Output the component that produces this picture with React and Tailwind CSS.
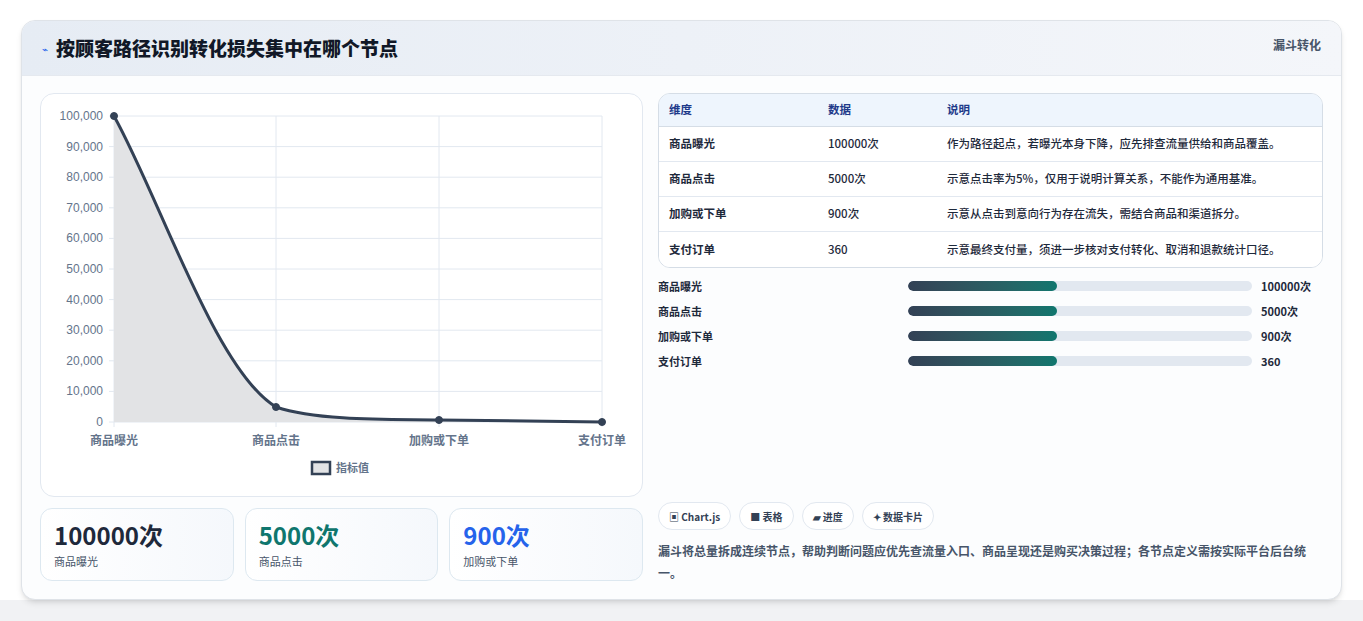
import React from "react";

const F = { fontFamily: '"Noto Sans CJK SC","Noto Sans",sans-serif' };
const rows = [
  ["商品曝光", "100000次", "作为路径起点，若曝光本身下降，应先排查流量供给和商品覆盖。"],
  ["商品点击", "5000次", "示意点击率为5%，仅用于说明计算关系，不能作为通用基准。"],
  ["加购或下单", "900次", "示意从点击到意向行为存在流失，需结合商品和渠道拆分。"],
  ["支付订单", "360", "示意最终支付量，须进一步核对支付转化、取消和退款统计口径。"],
];

function Chart() {
  const ys = [0, 10000, 20000, 30000, 40000, 50000, 60000, 70000, 80000, 90000, 100000];
  const y = (v) => 421 - (v / 100000) * 306;
  const xs = [113, 275, 438, 601];
  const labels = ["商品曝光", "商品点击", "加购或下单", "支付订单"];
  const curve = "M113,115 C160,200 215,370 275,406 C320,421 400,418 438,419 C500,420 560,421 601,421";
  return (
    <svg width="602" height="403" className="block">
      <g transform="translate(-40,-93)" fontFamily="Liberation Sans, sans-serif">
        {ys.map((v) => (
          <g key={v}>
            <line x1="108" x2="601" y1={y(v)} y2={y(v)} stroke="#e2e8f0" />
            <text x="102" y={y(v) + 4} textAnchor="end" fontSize="12" fill="#64748b">{v.toLocaleString("en-US")}</text>
          </g>
        ))}
        {xs.map((x) => (
          <line key={x} x1={x} x2={x} y1="115" y2="426" stroke="#e2e8f0" />
        ))}
        <path d={curve + " L601,421 L113,421 Z"} fill="#e2e3e5" />
        <path d={curve} fill="none" stroke="#334155" strokeWidth="3" />
        {[[113, 115], [275, 406], [438, 419], [601, 421]].map(([cx, cy]) => (
          <circle key={cx} cx={cx} cy={cy} r="3.5" fill="#334155" stroke="#334155" />
        ))}
        {xs.map((x, i) => (
          <text key={x} x={x} y="444" textAnchor="middle" fontSize="12" fontWeight="700" fill="#64748b" fontFamily='"Noto Sans CJK SC",sans-serif'>{labels[i]}</text>
        ))}
        <rect x="311" y="461" width="18" height="12" fill="#e2e3e5" stroke="#334155" strokeWidth="2.5" />
        <text x="335" y="471" fontSize="11" fontWeight="700" fill="#64748b" fontFamily='"Noto Sans CJK SC",sans-serif'>指标值</text>
      </g>
    </svg>
  );
}

export default function App() {
  return (
    <div className="min-h-[621px] bg-[#f1f2f4] pb-[22px]" style={F}>
      <div className="bg-white pt-[20px] px-[21px]">
      <div className="bg-[#fcfdfe] rounded-[14px] border border-[#dfe3e8] shadow-md overflow-hidden h-[580px]">
        <div className="h-[55px] bg-gradient-to-r from-[#e6ecf4] to-[#f4f6fa] flex items-center px-[20px] justify-between border-b border-[#e5e9ef]">
          <div className="flex items-center gap-[8px]">
            <span className="text-[#2563eb] text-[10px]">⌁</span>
            <span className="text-[19px] font-black text-[#111827]">按顾客路径识别转化损失集中在哪个节点</span>
          </div>
          <span className="text-[12px] font-bold text-[#475569] self-start mt-[15px]">漏斗转化</span>
        </div>
        <div className="flex gap-[15px] px-[18px] pt-[17px]">
          <div className="w-[603px] flex flex-col gap-[11px]">
            <div className="h-[404px] rounded-[14px] border border-[#e2e8f0] bg-white overflow-hidden"><Chart /></div>
            <div className="flex gap-[11px]">
              {[["100000次", "text-[#1e293b]", "商品曝光"], ["5000次", "text-[#0f766e]", "商品点击"], ["900次", "text-[#2563eb]", "加购或下单"]].map(([v, c, l]) => (
                <div key={l} className="flex-1 h-[73px] rounded-[12px] border border-[#dde8f0] bg-gradient-to-r from-white to-[#f5f8fc] px-[13px] pt-[8px]">
                  <div className={"text-[24px] font-bold leading-[36px] " + c}>{v}</div>
                  <div className="text-[11px] text-[#475569] leading-[16px]">{l}</div>
                </div>
              ))}
            </div>
          </div>
          <div className="flex-1 flex flex-col">
            <div className="rounded-[12px] border border-[#d5dde6] overflow-hidden text-[11.5px] text-[#1e293b] font-medium">
              <div className="flex h-[33px] items-center bg-[#eef5fd] font-bold text-[#1e3a8a] border-b border-[#d5dde6]">
                <div className="w-[169px] pl-[10px]">维度</div><div className="w-[119px]">数据</div><div>说明</div>
              </div>
              {rows.map((r, i) => (
                <div key={i} className={"flex h-[35px] items-center bg-white " + (i < 3 ? "border-b border-[#e2e8f0]" : "")}>
                  <div className="w-[169px] pl-[10px] font-bold">{r[0]}</div><div className="w-[119px]">{r[1]}</div><div>{r[2]}</div>
                </div>
              ))}
            </div>
            <div className="mt-[9px] flex flex-col gap-[7px] text-[11px] text-[#1e293b] font-bold">
              {rows.map((r, i) => (
                <div key={i} className="flex items-center h-[18px]">
                  <div className="w-[250px]">{r[0]}</div>
                  <div className="w-[344px] h-[10px] rounded-full bg-[#e2e8f0] overflow-hidden">
                    <div className="w-[149px] h-full rounded-full bg-gradient-to-r from-[#334155] to-[#0f766e]" />
                  </div>
                  <div className="ml-[9px] font-bold">{r[1]}</div>
                </div>
              ))}
            </div>
            <div className="mt-[132px] flex gap-[8px] text-[10px] font-bold text-[#334155]">
              {["▣ Chart.js", "■ 表格", "▰ 进度", "✦ 数据卡片"].map((t) => (
                <span key={t} className="h-[28px] px-[10px] flex items-center rounded-full border border-[#e2e8f0] bg-white">{t}</span>
              ))}
            </div>
            <p className="mt-[10px] pr-[8px] text-[12px] leading-[22px] text-[#475569] font-bold">漏斗将总量拆成连续节点，帮助判断问题应优先查流量入口、商品呈现还是购买决策过程；各节点定义需按实际平台后台统一。</p>
          </div>
        </div>
      </div>
      </div>
    </div>
  );
}
